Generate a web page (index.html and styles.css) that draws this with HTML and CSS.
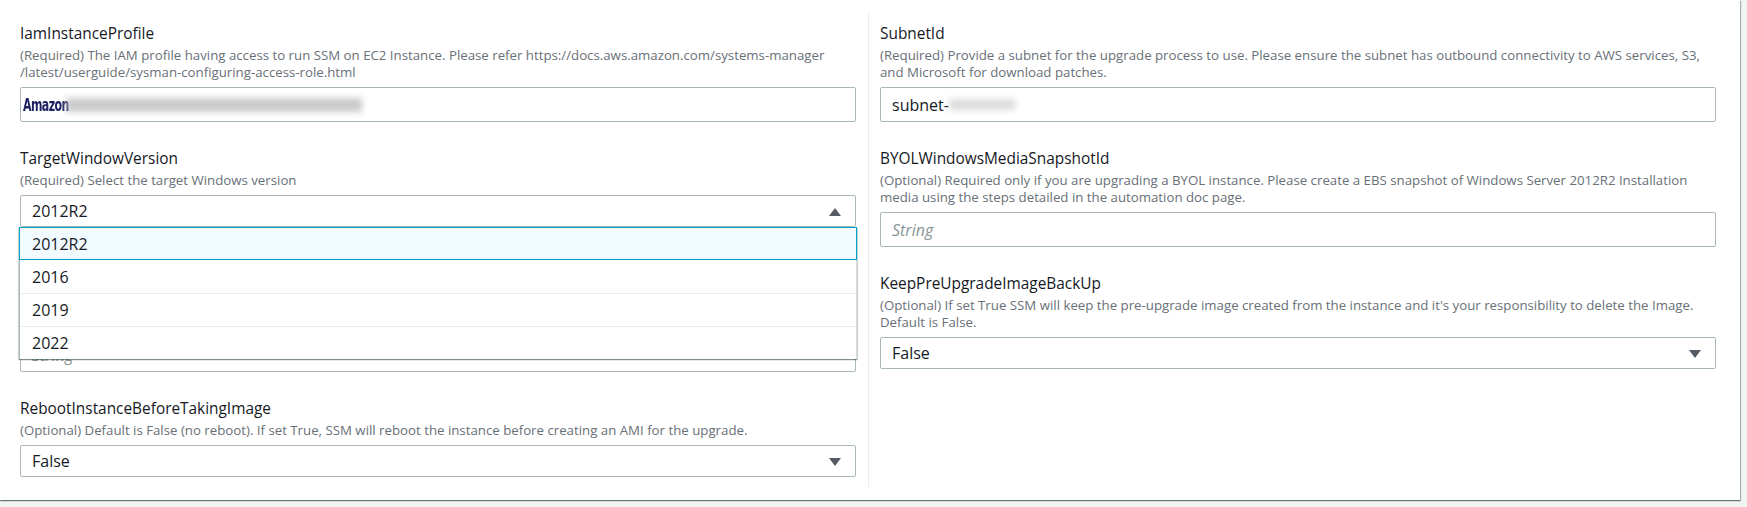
FILE: index.html
```html
<!DOCTYPE html>
<html lang="en">
<head>
<meta charset="utf-8">
<title>Input parameters</title>
<link rel="stylesheet" href="styles.css">
</head>
<body>
<div class="card">
  <div class="grid">
    <div class="divider"></div>

    <div class="field c1 r1">
      <div class="label">IamInstanceProfile</div>
      <div class="desc">(Required) The IAM profile having access to run SSM on EC2 Instance. Please refer https://docs.aws.amazon.com/systems-manager<br>/latest/userguide/sysman-configuring-access-role.html</div>
      <div class="input"><span class="redacted-name">Amazon</span><span class="blur blur-long"></span></div>
    </div>

    <div class="field c3 r1">
      <div class="label">SubnetId</div>
      <div class="desc">(Required) Provide a subnet for the upgrade process to use. Please ensure the subnet has outbound connectivity to AWS services, S3,<br>and Microsoft for download patches.</div>
      <div class="input">subnet-<span class="blur blur-short"></span></div>
    </div>

    <div class="field c1 r2">
      <div class="label">TargetWindowVersion</div>
      <div class="desc">(Required) Select the target Windows version</div>
      <div class="select-wrap">
        <div class="select open">2012R2
          <svg class="caret" width="12" height="8" viewBox="0 0 12 8"><polygon points="6,0 12,8 0,8" fill="#545b64"/></svg>
        </div>
        <ul class="menu">
          <li class="opt active">2012R2</li>
          <li class="opt">2016</li>
          <li class="opt">2019</li>
          <li class="opt">2022</li>
        </ul>
      </div>
    </div>

    <div class="field c3 r2">
      <div class="label">BYOLWindowsMediaSnapshotId</div>
      <div class="desc">(Optional) Required only if you are upgrading a BYOL instance. Please create a EBS snapshot of Windows Server 2012R2 Installation<br>media using the steps detailed in the automation doc page.</div>
      <div class="input placeholder">String</div>
    </div>

    <div class="field c1 r3">
      <div class="covered-head"></div>
      <div class="input placeholder">String</div>
    </div>

    <div class="field c3 r3">
      <div class="label">KeepPreUpgradeImageBackUp</div>
      <div class="desc">(Optional) If set True SSM will keep the pre-upgrade image created from the instance and it's your responsibility to delete the Image.<br>Default is False.</div>
      <div class="select">False
        <svg class="caret" width="12" height="8" viewBox="0 0 12 8"><polygon points="0,0 12,0 6,8" fill="#545b64"/></svg>
      </div>
    </div>

    <div class="field c1 r4 last">
      <div class="label">RebootInstanceBeforeTakingImage</div>
      <div class="desc">(Optional) Default is False (no reboot). If set True, SSM will reboot the instance before creating an AMI for the upgrade.</div>
      <div class="select">False
        <svg class="caret" width="12" height="8" viewBox="0 0 12 8"><polygon points="0,0 12,0 6,8" fill="#545b64"/></svg>
      </div>
    </div>
    <div class="field c3 r4 last"></div>
  </div>
</div>
</body>
</html>
```

FILE: styles.css
```css
* { box-sizing: border-box; }
html, body { margin: 0; padding: 0; }
body {
  background: #f2f3f3;
  font-family: "Open Sans", "Noto Sans", sans-serif;
  color: #16191f;
  width: 1747px;
  height: 507px;
  overflow: hidden;
}
.card {
  width: 1740px;
  height: 500px;
  background: #fff;
  padding: 12px 24px 13px 20px;
  box-shadow: 0 1px 1px 0 rgba(0, 28, 36, 0.45), 1px 1px 1px 0 rgba(0, 28, 36, 0.25);
}
.grid {
  display: grid;
  grid-template-columns: 836px 24px 836px;
  grid-template-rows: auto auto auto auto;
  row-gap: 15px;
}
.divider {
  grid-column: 2;
  grid-row: 1 / 5;
  width: 1px;
  margin-left: 12px;
  background: #eaeded;
}
.c1 { grid-column: 1; }
.c3 { grid-column: 3; }
.r1 { grid-row: 1; }
.r2 { grid-row: 2; }
.r3 { grid-row: 3; }
.r4 { grid-row: 4; }
.field { padding-top: 12px; }
.field.last { padding-bottom: 10px; }
.label {
  font-size: 15.4px;
  line-height: 20px;
  color: #16191f;
}
.desc {
  margin-top: 3px;
  font-size: 13.25px;
  line-height: 17px;
  color: #687078;
  white-space: nowrap;
}
.covered-head { height: 57px; }
.input, .select {
  margin-top: 6px;
  border: 1px solid #aab7b8;
  border-radius: 2px;
  background: #fff;
  font-size: 16px;
  color: #16191f;
  padding: 0 11px;
  display: flex;
  align-items: center;
}
.input { height: 35px; }
.select { height: 32px; position: relative; }
.select .caret { position: absolute; right: 14px; top: 12px; }
.placeholder { font-style: italic; color: #879596; }
.redacted-name {
  font-family: "DejaVu Sans Condensed", "DejaVu Sans", sans-serif;
  font-weight: bold;
  font-size: 17px;
  letter-spacing: -0.8px;
  color: #1e2160;
  margin-left: -9px;
  transform: scaleX(0.72);
  transform-origin: left center;
  display: inline-block;
  width: 43px;
}
.blur {
  display: inline-block;
  background: #b9b9b9;
  filter: blur(3px);
  opacity: 0.75;
  height: 14px;
}
.blur-long { width: 296px; }
.blur-short { width: 66px; height: 11px; opacity: 0.5; }
.select-wrap { position: relative; z-index: 2; }
.menu {
  position: absolute;
  left: -1px;
  right: -1px;
  top: 100%;
  margin: 0;
  padding: 0;
  list-style: none;
  background: #fff;
  border-left: 1px solid #aab7b8;
  border-right: 1px solid #d5dbdb;
  box-shadow: 0 1px 1px 0 rgba(0, 28, 36, 0.3), 1px 1px 1px 0 rgba(0, 28, 36, 0.15), -1px 1px 1px 0 rgba(0, 28, 36, 0.15);
}
.opt {
  height: 33px;
  display: flex;
  align-items: center;
  padding-left: 12px;
  font-size: 16px;
  color: #16191f;
  border-top: 1px solid #eaeded;
}
.opt.active {
  background: #f1faff;
  border: 1px solid #00a1c9;
  margin-left: -1px;
  margin-right: -1px;
}
.opt.active + .opt { border-top: none; }
```
